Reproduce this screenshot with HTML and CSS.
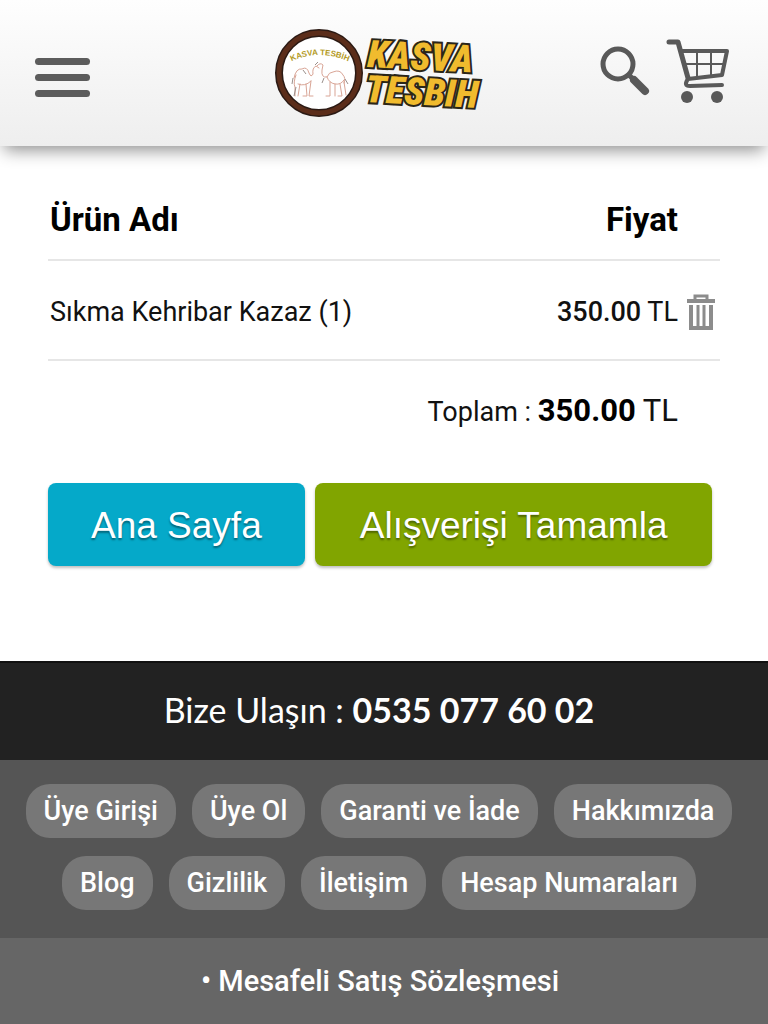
FILE: index.html
```html
<!DOCTYPE html>
<html lang="tr">
<head>
    <meta charset="UTF-8">
    <meta name="viewport" content="width=device-width, initial-scale=1.0">
    <title>Kasva Tesbih - Sepet</title>
    <link rel="stylesheet" href="styles.css">
</head>
<body>

<header class="header">
    <button class="menu-btn" type="button" aria-label="Menü">
        <span class="bar"></span>
        <span class="bar"></span>
        <span class="bar"></span>
    </button>

    <a class="logo" href="#" aria-label="Kasva Tesbih">
        <svg width="210" height="92" viewBox="0 0 210 92">
            <circle cx="45" cy="46" r="40" fill="#fff" stroke="#2b1a14" stroke-width="8"/>
            <circle cx="45" cy="46" r="40" fill="none" stroke="#5b2d1a" stroke-width="5"/>
            <path id="arc" d="M16 35 Q45 21 76 35" fill="none"/>
            <text class="badge-text"><textPath href="#arc" startOffset="50%">KASVA TESBİH</textPath></text>
            <!-- camels -->
            <g fill="none" stroke="#d9a596" stroke-width="1" stroke-linecap="round">
                <path d="M20 51 q2 -10 8 -9 q5 -3 7 4 q2 5 4 1 q-1 -6 3 -8 l3 2"/>
                <path d="M22 48 q-3 8 -1 12 v9 M26 57 l-2 12 M32 57 l1 12 h-4 M37 54 l-2 15 h4 M24 57 q7 3 13 -3"/>
                <path d="M43 39 q3 -4 6 -1 l-1 5 q-1 8 5 7 q2 -5 6 -5 q7 -3 10 3 q3 3 1 8"/>
                <path d="M53 50 q2 6 8 7 q6 1 9 -4 M56 55 v14 h-4 M61 57 v12 M66 57 l2 12 h-4 M70 55 l2 13"/>
            </g>
            <g fill="none" stroke="#9a8f8b" stroke-width="1">
                <path d="M19 51 l-1 6 M22 60 l-2 9 M29 43 l3 4 M41 38 l3 -3 M50 51 l-2 5 M71 52 l3 5"/>
            </g>
            <text class="logo-text" x="93" y="40" transform="rotate(3 93 40)">KASVA</text>
            <text class="logo-text" x="91" y="75" transform="rotate(3 91 75)">TESBIH</text>
        </svg>
    </a>

    <div class="header-icons">
        <a href="#" aria-label="Ara">
            <svg width="54" height="54" viewBox="0 0 54 54">
                <circle cx="20" cy="20" r="15" fill="none" stroke="#595959" stroke-width="5"/>
                <path d="M30 30 L35 35" stroke="#595959" stroke-width="5"/>
                <path d="M36 36 L47 47" stroke="#595959" stroke-width="8" stroke-linecap="round"/>
            </svg>
        </a>
        <a href="#" aria-label="Sepet">
            <svg width="66" height="66" viewBox="0 0 66 66">
                <g fill="none" stroke="#595959" stroke-linejoin="round" stroke-linecap="round">
                    <path stroke-width="5" d="M5 4 H14 L24 40"/>
                    <path stroke-width="4" d="M18 13 H63 L58 37 L24 41 Q19 48 26 48 L58 47"/>
                    <path stroke-width="2" d="M20 26 H60 M33 14 V39 M47 14 V38"/>
                </g>
                <circle cx="23" cy="59" r="6" fill="#595959"/>
                <circle cx="53" cy="59" r="6" fill="#595959"/>
            </svg>
        </a>
    </div>
</header>

<main class="cart">
    <table class="cart-table">
        <thead>
            <tr>
                <th>Ürün Adı</th>
                <th class="price">Fiyat</th>
                <td class="remove"></td>
            </tr>
        </thead>
        <tbody>
            <tr>
                <td>Sıkma Kehribar Kazaz (1)</td>
                <td class="price"><b>350.00</b> TL</td>
                <td class="remove">
                    <button class="remove-btn" type="button" aria-label="Sil">
                        <svg width="30" height="38" viewBox="0 0 30 38">
                            <path fill="none" stroke="#8c8c8c" stroke-width="3" d="M9 7 V3 H21 V7"/>
                            <path fill="#8c8c8c" d="M1 6 H29 V10 H1 Z"/>
                            <path fill="none" stroke="#8c8c8c" stroke-width="4" d="M5 12 V35 H25 V12"/>
                            <path fill="none" stroke="#8c8c8c" stroke-width="3" d="M12 12 V35 M18 12 V35"/>
                        </svg>
                    </button>
                </td>
            </tr>
        </tbody>
        <tfoot>
            <tr>
                <td colspan="2" class="price">Toplam : <span class="total"><strong>350.00</strong> TL</span></td>
                <td class="remove"></td>
            </tr>
        </tfoot>
    </table>

    <div class="actions">
        <button class="btn btn-home" type="button">Ana Sayfa</button>
        <button class="btn btn-finish" type="button">Alışverişi Tamamla</button>
    </div>
</main>

<footer>
    <p class="contact">Bize Ulaşın : <strong>0535 077 60 02</strong></p>

    <nav class="footer-links">
        <a href="#">Üye Girişi</a>
        <a href="#">Üye Ol</a>
        <a href="#">Garanti ve İade</a>
        <a href="#">Hakkımızda</a>
        <a href="#">Blog</a>
        <a href="#">Gizlilik</a>
        <a href="#">İletişim</a>
        <a href="#">Hesap Numaraları</a>
    </nav>

    <div class="agreement">
        <a href="#">• Mesafeli Satış Sözleşmesi</a>
    </div>
</footer>

</body>
</html>
```
FILE: styles.css
```css
*{
    margin: 0;
    padding: 0;
    box-sizing: border-box;
}

body{
    min-height: 100vh;
    display: flex;
    flex-direction: column;
    font-family: Roboto, "Liberation Sans", sans-serif;
    font-size: 27px;
    color: #111;
    background-color: white;
}

a{
    color: inherit;
    text-decoration: none;
}

button{
    border: none;
    background: none;
    cursor: pointer;
}

svg{
    display: block;
}

/* header */
.header{
    display: grid;
    grid-template-columns: 1fr auto 1fr;
    align-items: center;
    height: 146px;
    padding: 0 38px 0 35px;
    background: linear-gradient(#fefefe, #eee);
    box-shadow: 0 8px 16px -4px rgba(0, 0, 0, 0.45);
}

.menu-btn{
    display: flex;
    flex-direction: column;
    gap: 9px;
    width: 55px;
    padding-top: 8px;
}

.bar{
    height: 7px;
    border-radius: 4px;
    background-color: #5c5c5c;
}

.logo{
    margin-right: 8px;
}

.header-icons{
    display: flex;
    justify-content: flex-end;
    align-items: center;
    gap: 12px;
    padding-bottom: 5px;
}

.logo-text{
    font-family: "Liberation Sans Narrow", "Roboto Condensed", "Open Sans Condensed", "Liberation Sans", sans-serif;
    font-size: 38px;
    font-weight: 900;
    font-style: italic;
    fill: #f0bb2e;
    stroke: #2a2618;
    stroke-width: 4px;
    paint-order: stroke;
}

.badge-text{
    font-family: "Liberation Sans", sans-serif;
    font-size: 8px;
    font-weight: bold;
    text-anchor: middle;
    fill: #b39a24;
}

/* cart */
.cart{
    flex: 1;
    padding: 34px 48px;
}

.cart-table{
    width: 100%;
    border-collapse: collapse;
}

.cart-table th,
.cart-table td{
    height: 100px;
    padding: 0 2px;
    text-align: left;
}

.cart-table tbody td{
    padding-top: 4px;
}

.cart-table thead th,
.cart-table thead td{
    height: 80px;
    font-size: 33px;
    color: black;
}

.cart-table thead tr,
.cart-table tbody tr{
    border-bottom: 2px solid #e6e6e6;
}

.cart-table .price{
    padding-right: 0;
    text-align: right;
}

.cart-table .remove{
    width: 42px;
    padding-left: 8px;
}

.price b{
    font-weight: 500;
}

.total{
    font-size: 31px;
}

.total strong{
    color: black;
}

.remove-btn{
    display: block;
}

.actions{
    display: flex;
    gap: 10px;
    padding-top: 23px;
}

.btn{
    height: 83px;
    padding: 2px 43px 0;
    border-radius: 8px;
    font-family: "Liberation Sans", Arial, sans-serif;
    font-size: 37px;
    color: white;
    text-shadow: 0 2px 2px rgba(0, 0, 0, 0.4);
    box-shadow: 0 2px 3px rgba(0, 0, 0, 0.25);
    white-space: nowrap;
}

.btn-home{
    background-color: #05a9c9;
}

.btn-finish{
    padding: 2px 45px 0;
    background-color: #81a500;
}

/* footer */
.contact{
    padding: 28px 10px 31px 0;
    border-top: 2px solid #111;
    font-family: "Century Gothic", Lato, sans-serif;
    font-size: 34px;
    line-height: 38px;
    text-align: center;
    color: white;
    background-color: #222;
}

.footer-links{
    display: flex;
    flex-wrap: wrap;
    justify-content: center;
    gap: 18px 16px;
    padding: 24px 20px 28px 10px;
    font-weight: 500;
    color: white;
    background-color: #555;
}

.footer-links a{
    padding: 0 18px;
    border-radius: 24px;
    line-height: 54px;
    background-color: #777;
}

.agreement{
    padding: 24px 8px 24px 0;
    font-size: 29px;
    font-weight: 500;
    line-height: 38px;
    text-align: center;
    color: white;
    background-color: #666;
}
```
